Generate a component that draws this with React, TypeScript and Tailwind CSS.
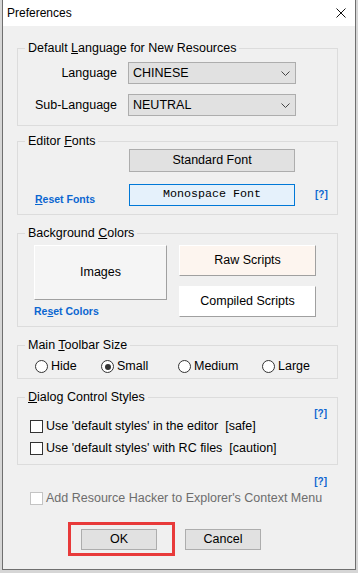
import React from 'react';

const GroupBox: React.FC<{ title: React.ReactNode; className?: string; children: React.ReactNode }> = ({
  title,
  className,
  children,
}) => (
  <div className={`relative w-[321px] border border-[#dcdcdc] ${className ?? ''}`}>
    <span className="absolute left-[7px] top-[-8px] bg-[#f0f0f0] px-[3px] leading-[15px]">{title}</span>
    {children}
  </div>
);

const Chevron = () => (
  <svg width="9" height="5" viewBox="0 0 9 5" className="shrink-0">
    <polyline points="0.5,0.5 4.5,4.5 8.5,0.5" fill="none" stroke="#444" strokeWidth="1" />
  </svg>
);

const Select: React.FC<{ value: string }> = ({ value }) => (
  <div className="ml-[11px] flex h-[22px] w-[168px] items-center justify-between border border-[#adadad] bg-[#e1e1e1] pl-[4px] pr-[5px]">
    <span>{value}</span>
    <Chevron />
  </div>
);

const Radio: React.FC<{ label: string; checked?: boolean; className: string }> = ({ label, checked, className }) => (
  <div className={`flex h-[13px] items-center gap-[3px] ${className}`}>
    <span className="flex h-[13px] w-[13px] items-center justify-center rounded-full border border-[#333] bg-white">
      {checked && <span className="h-[6px] w-[6px] rounded-full bg-[#333]" />}
    </span>
    <span>{label}</span>
  </div>
);

const Check: React.FC<{ children: React.ReactNode; disabled?: boolean; className?: string }> = ({
  children,
  disabled,
  className,
}) => (
  <div className={`flex h-[13px] items-center gap-[3px] ${className ?? ''}`}>
    <span
      className={`h-[13px] w-[13px] shrink-0 bg-white border ${disabled ? 'border-[#c4c4c4]' : 'border-[#333]'}`}
    />
    <span className={disabled ? 'text-[#6d6d6d]' : ''}>{children}</span>
  </div>
);

const Help = () => <span className="text-[10px] font-bold leading-[13px] text-[#0b66d0]">[?]</span>;

export default function App() {
  return (
    <div className="h-[573px] w-[358px] bg-[#d6d6d6] pl-[2px] font-['Liberation_Sans',Arial,sans-serif] text-[12.5px] text-black">
      <div className="flex h-[570px] w-[354px] flex-col border-x border-b border-[#6f6f6f]">
        {/* title bar */}
        <div className="flex h-[26px] items-center justify-between bg-white pl-[4px] pr-[9px]">
          <span className="text-[12px]">Preferences</span>
          <svg width="10" height="10" viewBox="0 0 10 10">
            <path d="M0.5 0.5 L9.5 9.5 M9.5 0.5 L0.5 9.5" stroke="#111" strokeWidth="1" />
          </svg>
        </div>

        <div className="flex-1 bg-[#f0f0f0] pl-[14px]">
          <GroupBox
            className="mt-[22px] pt-[13px] pb-[9px]"
            title={
              <>
                Default <u>L</u>anguage for New Resources
              </>
            }
          >
            <div className="flex h-[22px] items-center">
              <span className="w-[99px] text-right">Language</span>
              <Select value="CHINESE" />
            </div>
            <div className="mt-[10px] flex h-[22px] items-center">
              <span className="w-[99px] text-right">Sub-Language</span>
              <Select value="NEUTRAL" />
            </div>
          </GroupBox>

          <GroupBox
            className="mt-[15px] pt-[7px] pb-[8px]"
            title={
              <>
                Editor <u>F</u>onts
              </>
            }
          >
            <div className="ml-[111px] flex h-[23px] w-[166px] items-center justify-center border border-[#adadad] bg-[#e1e1e1]">
              Standard Font
            </div>
            <div className="mt-[12px] flex items-start">
              <span className="ml-[17px] mt-[9px] w-[94px] text-[10.5px] font-bold leading-[13px] text-[#0b66d0]">
                <u>R</u>eset Fonts
              </span>
              <div className="flex h-[22px] w-[166px] items-center justify-center border border-[#0078d7] bg-[#e5f1fb] font-['Liberation_Mono','Courier_New',monospace] text-[11.7px]">
                Monospace Font
              </div>
              <span className="ml-[20px] mt-[1px]">
                <Help />
              </span>
            </div>
          </GroupBox>

          <GroupBox
            className="mt-[18px] flex pt-[11px] pb-[9px]"
            title={
              <>
                Background <u>C</u>olors
              </>
            }
          >
            <div className="ml-[16px] flex flex-col">
              <div className="flex h-[55px] w-[133px] items-center justify-center border-t border-l border-white border-b border-r border-b-[#a0a0a0] border-r-[#a0a0a0] bg-[#f5f5f5]">
                Images
              </div>
              <span className="mt-[5px] text-[10.5px] font-bold leading-[12px] text-[#0b66d0]">
                Re<u>s</u>et Colors
              </span>
            </div>
            <div className="ml-[12px] flex flex-col">
              <div className="flex h-[31px] w-[137px] items-center justify-center border-t border-l border-white border-b border-r border-b-[#a0a0a0] border-r-[#a0a0a0] bg-[#fdf5ef]">
                Raw Scripts
              </div>
              <div className="mt-[10px] flex h-[31px] w-[137px] items-center justify-center border-t border-l border-white border-b border-r border-b-[#a0a0a0] border-r-[#a0a0a0] bg-white">
                Compiled Scripts
              </div>
            </div>
          </GroupBox>

          <GroupBox
            className="mt-[18px] flex pt-[14px] pb-[5px] pl-[17px]"
            title={
              <>
                Main <u>T</u>oolbar Size
              </>
            }
          >
            <Radio label="Hide" className="w-[66px]" />
            <Radio label="Small" checked className="w-[77px]" />
            <Radio label="Medium" className="w-[84px]" />
            <Radio label="Large" className="w-[60px]" />
          </GroupBox>

          <GroupBox
            className="mt-[18px] pt-[9px] pb-[9px]"
            title={
              <>
                <u>D</u>ialog Control Styles
              </>
            }
          >
            <div className="flex h-[13px] justify-end pr-[10px]">
              <Help />
            </div>
            <Check className="pl-[12px]">Use 'default styles' in the editor&nbsp;&nbsp;[safe]</Check>
            <Check className="mt-[9px] pl-[12px]">Use 'default styles' with RC files&nbsp;&nbsp;[caution]</Check>
          </GroupBox>

          <div className="mt-[10px] flex h-[13px] w-[321px] justify-end pr-[11px]">
            <Help />
          </div>
          <Check disabled className="mt-[4px] pl-[13px]">
            Add Resource Hacker to Explorer's Context Menu
          </Check>

          <div className="ml-[51px] mt-[17px] flex items-start">
            <div className="border-[3px] border-[#e83a3a] pl-[10px] pr-[15px] pt-[4px] pb-[3px]">
              <div className="flex h-[21px] w-[76px] items-center justify-center border border-[#adadad] bg-[#e1e1e1]">
                OK
              </div>
            </div>
            <div className="ml-[10px] mt-[7px] flex h-[21px] w-[76px] items-center justify-center border border-[#adadad] bg-[#e1e1e1]">
              Cancel
            </div>
          </div>
        </div>
      </div>
    </div>
  );
}
